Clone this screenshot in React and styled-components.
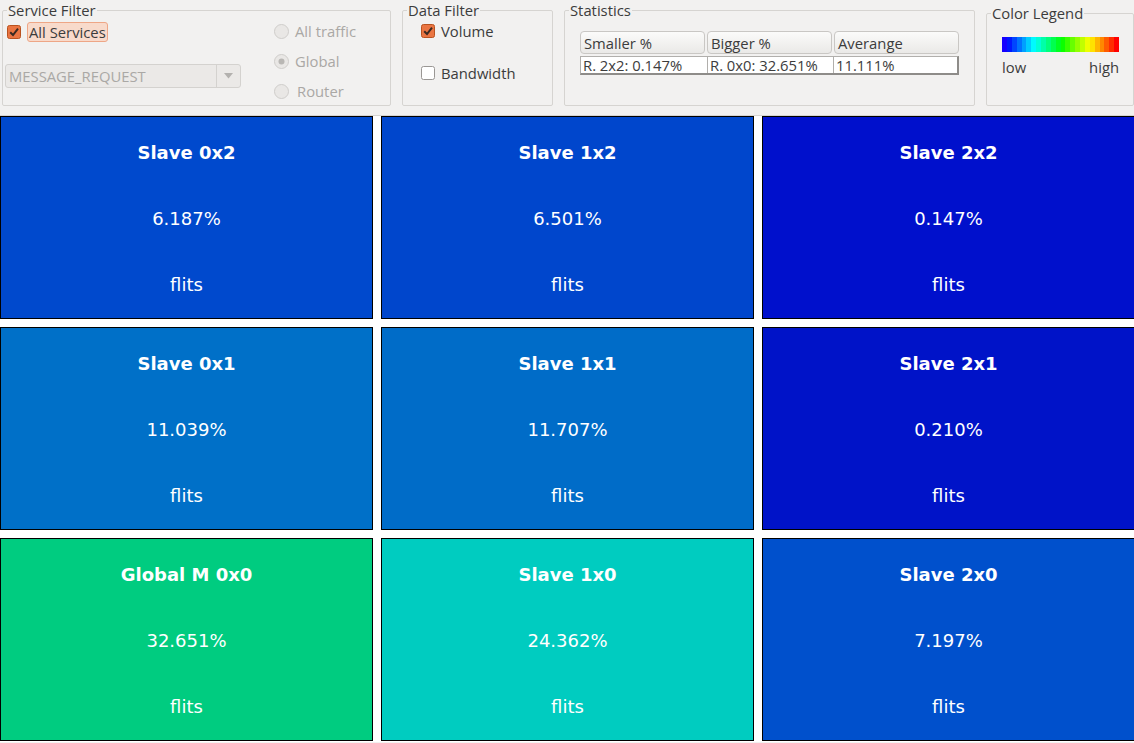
import React from "react";
import styled, { createGlobalStyle } from "styled-components";

const tiles = [
  { name: "Slave 0x2", value: "6.187%", color: "#0049cd" },
  { name: "Slave 1x2", value: "6.501%", color: "#0046cc" },
  { name: "Slave 2x2", value: "0.147%", color: "#0010cc" },
  { name: "Slave 0x1", value: "11.039%", color: "#0070c8" },
  { name: "Slave 1x1", value: "11.707%", color: "#006cc8" },
  { name: "Slave 2x1", value: "0.210%", color: "#0013c8" },
  { name: "Global M 0x0", value: "32.651%", color: "#00cc80" },
  { name: "Slave 1x0", value: "24.362%", color: "#00ccc0" },
  { name: "Slave 2x0", value: "7.197%", color: "#0050cc" },
];

const legendSteps = Array.from({ length: 24 }, (_, i) => `hsl(${245 - (245 * i) / 23}, 100%, 50%)`);

function CheckBox({ checked }) {
  return (
    <svg width="14" height="14" viewBox="0 0 14 14">
      {checked ? (
        <>
          <rect x="0.5" y="0.5" width="13" height="13" rx="2" fill="#ea7542" stroke="#b9521f" />
          <path d="M3.2 7.2 L6 10 L11 3.6" fill="none" stroke="#3a2a22" strokeWidth="2" />
        </>
      ) : (
        <rect x="0.5" y="0.5" width="13" height="13" rx="2" fill="#fff" stroke="#9a9794" />
      )}
    </svg>
  );
}

function Radio({ checked }) {
  return (
    <svg width="15" height="15" viewBox="0 0 15 15">
      <circle cx="7.5" cy="7.5" r="7" fill="#e9e7e5" stroke="#cfcdca" />
      {checked && <circle cx="7.5" cy="7.5" r="3" fill="#b9b7b4" />}
    </svg>
  );
}

export default function App() {
  return (
    <>
      <GlobalStyle />
      <Page>
        <TopBar>
          <Group $width={389}>
            <Legend>Service Filter</Legend>
            <ServiceBody>
              <LeftCol>
                <CheckRow>
                  <CheckBox checked />
                  <FocusLabel>All Services</FocusLabel>
                </CheckRow>
                <Combo>
                  <ComboText>MESSAGE_REQUEST</ComboText>
                  <ComboArrow>
                    <svg width="9" height="6" viewBox="0 0 9 6">
                      <path d="M0 0 H9 L4.5 5.5 Z" fill="#b3b1ae" />
                    </svg>
                  </ComboArrow>
                </Combo>
              </LeftCol>
              <RadioCol>
                <RadioRow>
                  <Radio />
                  <DisabledText>All traffic</DisabledText>
                </RadioRow>
                <RadioRow>
                  <Radio checked />
                  <DisabledText>Global</DisabledText>
                </RadioRow>
                <RadioRow>
                  <Radio />
                  <DisabledText $pad>Router</DisabledText>
                </RadioRow>
              </RadioCol>
            </ServiceBody>
          </Group>

          <Group $width={151}>
            <Legend>Data Filter</Legend>
            <DataBody>
              <CheckRow>
                <CheckBox checked />
                <Label>Volume</Label>
              </CheckRow>
              <CheckRow>
                <CheckBox />
                <Label>Bandwidth</Label>
              </CheckRow>
            </DataBody>
          </Group>

          <Group $width={411}>
            <Legend>Statistics</Legend>
            <Table>
              <HeaderRow>
                <HeaderCell>Smaller %</HeaderCell>
                <HeaderCell>Bigger %</HeaderCell>
                <HeaderCell>Averange</HeaderCell>
              </HeaderRow>
              <DataRow>
                <Cell>R. 2x2: 0.147%</Cell>
                <Cell>R. 0x0: 32.651%</Cell>
                <Cell>11.111%</Cell>
              </DataRow>
            </Table>
          </Group>

          <Group $width={148} $offset={3}>
            <Legend>Color Legend</Legend>
            <LegendBody>
              <Spectrum>
                {legendSteps.map((c, i) => (
                  <Step key={i} style={{ background: c }} />
                ))}
              </Spectrum>
              <SpectrumLabels>
                <Label>low</Label>
                <Label>high</Label>
              </SpectrumLabels>
            </LegendBody>
          </Group>
        </TopBar>

        <Grid>
          {tiles.map((t) => (
            <Tile key={t.name} $color={t.color}>
              <TileTitle>{t.name}</TileTitle>
              <TileText>{t.value}</TileText>
              <TileText>flits</TileText>
            </Tile>
          ))}
        </Grid>
      </Page>
    </>
  );
}

const GlobalStyle = createGlobalStyle`
  html, body {
    margin: 0;
    padding: 0;
    background: #f2f1f0;
    overflow: hidden;
  }
  * {
    box-sizing: border-box;
  }
`;

const Page = styled.div`
  width: 1134px;
  height: 743px;
  overflow: hidden;
  font-family: "Open Sans", "DejaVu Sans", sans-serif;
  font-size: 14.8px;
  color: #3c3c3c;
`;

const TopBar = styled.div`
  height: 116px;
  display: flex;
  align-items: flex-start;
  gap: 11px;
  padding-left: 2px;
  background: #f2f1f0;
  border-bottom: 1px solid #d6d4d1;
`;

const Group = styled.fieldset`
  margin: ${(p) => p.$offset || 0}px 0 0 0;
  padding: 0;
  width: ${(p) => p.$width}px;
  height: ${(p) => 106 - (p.$offset || 0)}px;
  border: 1px solid #d6d4d1;
  border-radius: 2px;
  min-width: 0;
  flex: none;
`;

const Legend = styled.legend`
  margin-left: 4px;
  padding: 0 1px;
  font-size: 14.8px;
  line-height: 20px;
  color: #3c3c3c;
`;

const ServiceBody = styled.div`
  display: flex;
  gap: 33px;
  padding-left: 2px;
`;

const LeftCol = styled.div`
  width: 236px;
  display: flex;
  flex-direction: column;
  gap: 22px;
  padding-top: 2px;
`;

const CheckRow = styled.div`
  height: 20px;
  display: flex;
  align-items: center;
  gap: 6px;
  padding-left: 2px;
`;

const FocusLabel = styled.span`
  height: 20px;
  display: flex;
  align-items: center;
  padding: 0 1px;
  background: #f8dacb;
  border: 1px solid #eea686;
  border-radius: 3px;
`;

const Label = styled.span`
  line-height: 18px;
`;

const Combo = styled.div`
  height: 24px;
  display: flex;
  align-items: stretch;
  background: #ebe9e7;
  border: 1px solid #d4d2cf;
  border-radius: 3px;
`;

const ComboText = styled.span`
  flex: 1;
  display: flex;
  align-items: center;
  padding-left: 3px;
  color: #aaa8a5;
`;

const ComboArrow = styled.span`
  width: 24px;
  display: flex;
  align-items: center;
  justify-content: center;
  border-left: 1px solid #d4d2cf;
`;

const RadioCol = styled.div`
  display: flex;
  flex-direction: column;
  gap: 10px;
  padding-top: 1px;
`;

const RadioRow = styled.div`
  height: 20px;
  display: flex;
  align-items: center;
  gap: 6px;
`;

const DisabledText = styled.span`
  color: #aaa8a5;
  padding-left: ${(p) => (p.$pad ? 2 : 0)}px;
`;

const DataBody = styled.div`
  display: flex;
  flex-direction: column;
  gap: 22px;
  padding: 1px 0 0 16px;
`;

const Table = styled.div`
  margin: 11px 0 0 15px;
  width: 379px;
  background: #fff;
`;

const HeaderRow = styled.div`
  display: grid;
  grid-template-columns: 125px 125px 125px;
  gap: 2px;
  padding-bottom: 2px;
  background: #f2f1f0;
`;

const HeaderCell = styled.div`
  height: 23px;
  display: flex;
  align-items: center;
  padding-left: 3px;
  border: 1px solid #c9c7c4;
  border-radius: 4px;
  background: linear-gradient(#fbfbfa, #eae9e7);
`;

const DataRow = styled.div`
  display: grid;
  grid-template-columns: 126px 126px 1fr;
  height: 19px;
  border: 1px solid #b1afac;
  border-right-color: #8e8c89;
  border-bottom-color: #8e8c89;
  border-bottom-width: 2px;
  border-right-width: 2px;
`;

const Cell = styled.div`
  display: flex;
  align-items: center;
  padding-left: 2px;
  line-height: 16px;
  & + & {
    border-left: 1px solid #b1afac;
  }
`;

const LegendBody = styled.div`
  padding: 14px 0 0 15px;
  width: 132px;
`;

const Spectrum = styled.div`
  width: 117px;
  height: 15px;
  display: flex;
`;

const Step = styled.span`
  flex: 1;
`;

const SpectrumLabels = styled.div`
  width: 117px;
  display: flex;
  justify-content: space-between;
  margin-top: 6px;
`;

const Grid = styled.div`
  display: grid;
  grid-template-columns: repeat(3, 373px);
  grid-template-rows: repeat(3, 203px);
  gap: 8px;
  background: #fff;
  padding-bottom: 1px;
`;

const Tile = styled.div`
  display: grid;
  grid-template-rows: repeat(3, 1fr);
  padding-top: 2px;
  background: ${(p) => p.$color};
  border: 1px solid #000;
  color: #fff;
  font-family: "DejaVu Sans", "Verdana", sans-serif;
  font-size: 18px;
`;

const TileText = styled.div`
  display: flex;
  align-items: center;
  justify-content: center;
`;

const TileTitle = styled(TileText)`
  font-weight: bold;
`;
